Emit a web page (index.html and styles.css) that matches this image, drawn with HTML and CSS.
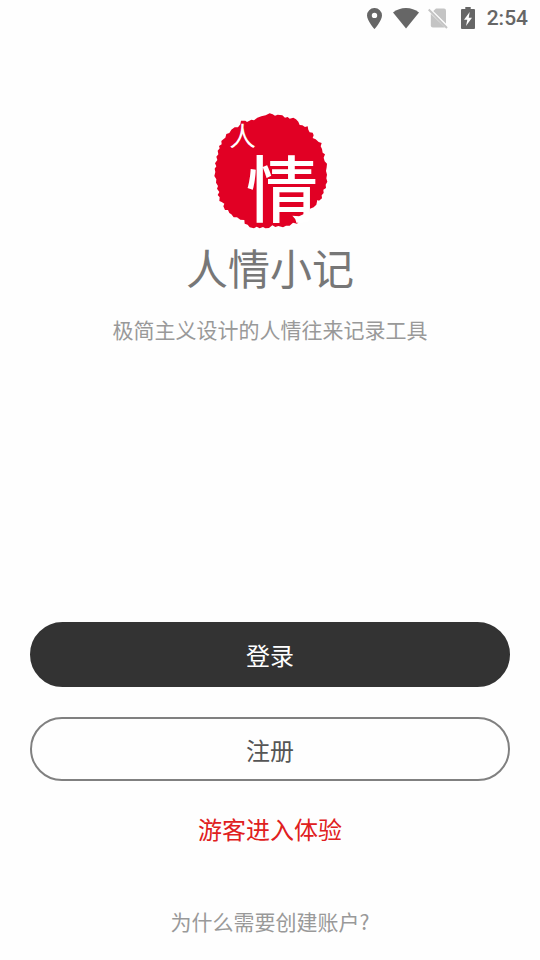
FILE: index.html
```html
<!DOCTYPE html>
<html lang="zh-CN">
<head>
    <meta charset="UTF-8">
    <meta name="viewport" content="width=device-width, initial-scale=1.0">
    <title>人情小记</title>
    <link rel="stylesheet" href="styles.css">
</head>
<body>
    <div class="status-bar">
        <svg class="icon-location" viewBox="0 0 15 21" width="15" height="21" aria-hidden="true">
            <path fill-rule="evenodd" d="M7.500 0A7.400 7.400 0 0 0 0 7.400C0 12.500 7.500 21 7.500 21S15 12.500 15 7.400A7.400 7.400 0 0 0 7.500 0zM7.500 4.700a2.700 2.700 0 1 1 0 5.400a2.700 2.700 0 0 1 0-5.400z"/>
        </svg>
        <svg class="icon-wifi" viewBox="0 0 26 21" width="26" height="21" aria-hidden="true">
            <path d="M0 4.500C3.600 1.600 8.200 0 13 0s9.400 1.600 13 4.500L13 20.500z"/>
        </svg>
        <svg class="icon-sim" viewBox="0 0 20 21" width="20" height="21" aria-hidden="true">
            <path d="M8 .500H16Q18 .500 18 2.500V17L4.500 3.800z"/>
            <path d="M2.800 5.800L16.800 19.300Q16.500 19.500 16 19.500H4.800Q2.800 19.500 2.800 17.500z"/>
            <path class="sim-gap" d="M1.500 .800L19.500 18.500"/>
            <path class="sim-slash" d="M.700 1.500L19 20"/>
        </svg>
        <svg class="icon-battery" viewBox="0 0 14 22" width="14" height="22" aria-hidden="true">
            <path fill-rule="evenodd" d="M4.300 0h5.400v2H13q1 0 1 1v18q0 1-1 1H1q-1 0-1-1V3q0-1 1-1h3.300zM8.700 5L3 12.700h3.300L5 19L11 10.700H7.700z"/>
        </svg>
        <span class="clock">2:54</span>
    </div>

    <header class="brand">
        <svg class="logo" viewBox="21 21 348 354" width="116" height="118" role="img" aria-label="人情">
            <!-- rough edged seal -->
            <path class="seal" d="M182 31L194 25L203 28L210 32L218 29L232 31L240 38L248 36L254 41L265 38L273 43L280 50L284 60L292 61L300 66L308 64L310 74L314 82L323 83L326 91L323 99L332 103L341 111L350 114L347 124L351 132L353 143L360 148L356 158L359 169L366 176L365 187L363 198L366 209L364 220L367 230L362 239L363 249L355 254L356 264L350 271L351 280L342 287L337 285L334 299L326 307L315 311L313 321L303 325L308 335L294 341L284 340L282 350L276 356L264 353L254 362L243 362L234 367L220 363L211 366L202 361L192 369L181 370L174 366L164 370L155 365L147 370L134 367L128 359L119 356L118 345L106 344L96 337L86 337L79 328L73 324L69 315L60 315L55 304L58 296L50 291L43 288L44 277L38 270L43 261L36 251L39 243L33 233L34 223L28 213L31 201L29 191L34 184L30 175L37 165L34 155L40 148L38 137L44 130L42 123L50 118L49 108L55 103L61 98L64 87L73 84L79 74L89 67L99 67L106 58L108 47L121 47L126 51L139 44L147 46L157 38L169 34Z"/>
            <path class="seal-gap" d="M262 332L282 334L302 325L310 337L292 343L284 347L270 341Z"/>
            <text class="seal-small" x="73" y="122">人</text>
            <text class="seal-large" x="123" y="333">情</text>
        </svg>
        <h1 class="title">人情小记</h1>
        <p class="tagline">极简主义设计的人情往来记录工具</p>
    </header>

    <main class="actions">
        <button type="button" class="btn btn-login">登录</button>
        <button type="button" class="btn btn-register">注册</button>
        <a href="#" class="guest-link">游客进入体验</a>
        <a href="#" class="help-link">为什么需要创建账户?</a>
    </main>
</body>
</html>
```
FILE: styles.css
```css
* { box-sizing: border-box; }
body {
    display: flex;
    flex-direction: column;
    min-height: 100vh;
    margin: 0;
    background-color: #fefefe;
    font-family: "Noto Sans CJK SC", sans-serif;
}

/* status bar */
.status-bar {
    display: flex;
    align-items: center;
    justify-content: flex-end;
    height: 36px;
    padding-right: 12px;
    fill: #666;
}
.icon-location { margin-right: 11px; }
.icon-wifi { margin-right: 9px; }
.icon-sim { margin-right: 13px; fill: #c4c4c4; }
.sim-gap { stroke: #fefefe; stroke-width: 2; }
.sim-slash { stroke: #c4c4c4; stroke-width: 2; }
.icon-battery { margin-right: 12px; }
.clock { color: #666; font: 500 21px/24px Roboto, sans-serif; }

/* logo and name */
.brand {
    display: flex;
    flex-direction: column;
    align-items: center;
    padding-top: 76px;
    text-align: center;
}
.logo { overflow: visible; }
.seal { fill: #e10024; }
.seal-gap { fill: #fefefe; }
.seal-small { fill: #fff; font-size: 80px; }
.seal-large { fill: #fff; font-size: 216px; font-weight: 500; }
.title { margin: 7px 0 0; color: #777; font-size: 42px; font-weight: 400; line-height: 60px; }
.tagline { margin: 17px 0 0; color: #999; font-size: 21px; line-height: 30px; }

/* buttons and links */
.actions {
    display: flex;
    flex-direction: column;
    align-items: center;
    margin-top: auto;
    padding: 30px 30px 24px;
}
.btn {
    width: 100%;
    height: 65px;
    margin-bottom: 30px;
    padding: 0;
    border: 2px solid #333;
    border-radius: 33px;
    font-family: inherit;
    font-size: 24px;
    cursor: pointer;
}
.btn-login { background-color: #333; color: #fff; }
.btn-register { height: 64px; border-color: #808080; background-color: transparent; color: #555; }
.guest-link { color: #e02020; font-size: 24px; line-height: 36px; text-decoration: none; }
.help-link { margin-top: 59px; color: #999; font-size: 21px; line-height: 30px; text-decoration: none; }
```
